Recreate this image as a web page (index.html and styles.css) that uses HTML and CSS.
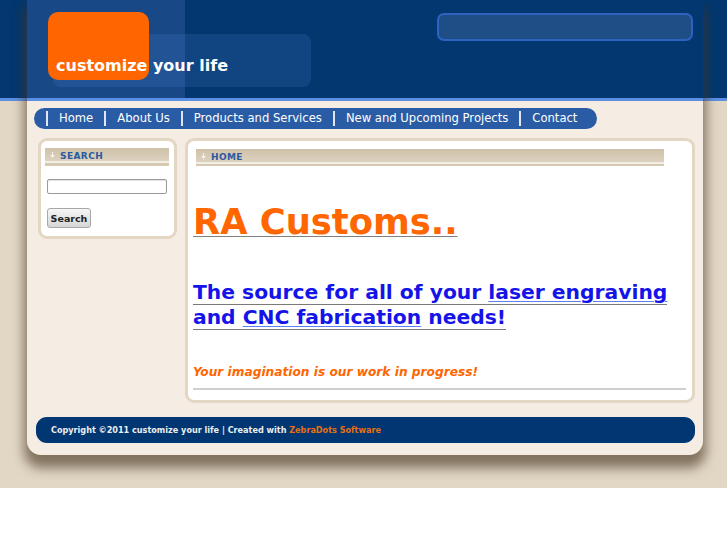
FILE: index.html
```html
<!DOCTYPE html>
<html lang="en">
<head>
    <meta charset="UTF-8">
    <title>customize your life</title>
    <link rel="stylesheet" href="styles.css">
</head>
<body>
    <div class="stage">
        <div class="page">
            <header class="masthead">
                <div class="brand">
                    <span class="brand-glass"></span>
                    <span class="brand-tab"></span>
                    <div class="brand-name">customize your life</div>
                </div>
                <div class="top-search"></div>
            </header>

            <nav class="menu">
                <ul>
                    <li><a href="#">Home</a></li>
                    <li><a href="#">About Us</a></li>
                    <li><a href="#">Products and Services</a></li>
                    <li><a href="#">New and Upcoming Projects</a></li>
                    <li><a href="#">Contact</a></li>
                </ul>
            </nav>

            <div class="columns">
                <aside class="sidebox">
                    <div class="boxbar">
                        <svg class="boxbar-arrow" width="5" height="6" viewBox="0 0 5 6"><path d="M2 0h1v3h2L2.5 6 0 3h2z" fill="#f7f2ea"/></svg>
                        <span>SEARCH</span>
                    </div>
                    <form class="search-form">
                        <input class="search-input" type="text">
                        <button class="search-button" type="button">Search</button>
                    </form>
                </aside>

                <main class="mainbox">
                    <div class="boxbar boxbar-main">
                        <svg class="boxbar-arrow" width="5" height="6" viewBox="0 0 5 6"><path d="M2 0h1v3h2L2.5 6 0 3h2z" fill="#f7f2ea"/></svg>
                        <span>HOME</span>
                    </div>
                    <h1 class="headline"><span>RA Customs..</span></h1>
                    <h2 class="tagline"><span class="tagline-line">The source for all of your <a href="#">laser engraving</a> and <a href="#">CNC fabrication</a> needs!</span></h2>
                    <p class="motto">Your imagination is our work in progress!</p>
                    <hr class="rule">
                </main>
            </div>

            <footer class="footer">
                Copyright &copy;2011 customize your life | Created with&nbsp;<a href="#">ZebraDots Software</a>
            </footer>
        </div>
    </div>
</body>
</html>
```

FILE: styles.css
```css
* {
    box-sizing: border-box;
}

html, body {
    margin: 0;
    padding: 0;
    background: #fff;
    font-family: "DejaVu Sans", Verdana, sans-serif;
}

.stage {
    height: 488px;
    overflow: hidden;
    background: linear-gradient(to bottom, #02376f 0, #02376f 98px, #5b8fe4 98px, #5b8fe4 101px, #e2d7c5 101px);
}

.page {
    width: 676px;
    height: 455px;
    margin-left: 27px;
    background: #f5ede3;
    border-radius: 0 0 14px 14px;
    box-shadow: 0 10px 12px 3px rgba(70, 52, 30, 0.62);
    display: flex;
    flex-direction: column;
}

/* header */

.masthead {
    height: 101px;
    display: flex;
    align-items: flex-start;
    background: #02376f;
    border-bottom: 3px solid #5b8fe4;
}

.brand {
    position: relative;
    width: 158px;
    height: 98px;
    background: #184886;
}

.brand-glass {
    position: absolute;
    left: 26px;
    top: 34px;
    width: 258px;
    height: 53px;
    border-radius: 8px;
    background: rgba(90, 140, 220, 0.17);
}

.brand-tab {
    position: absolute;
    left: 21px;
    top: 12px;
    width: 101px;
    height: 68px;
    border-radius: 10px;
    background: #ff6600;
}

.brand-name {
    position: relative;
    padding: 56px 0 0 29px;
    font-size: 16px;
    line-height: 20px;
    font-weight: bold;
    color: #fff;
    white-space: nowrap;
}

.top-search {
    width: 256px;
    height: 28px;
    margin: 13px 10px 0 auto;
    border: 2px solid #2c62c2;
    border-radius: 7px;
    background: #1f4e87;
}

/* menu */

.menu {
    width: 563px;
    height: 21px;
    margin: 7px 0 0 7px;
    background: #2a5ca6;
    border-radius: 11px;
}

.menu ul {
    list-style: none;
    margin: 0;
    padding: 0 0 0 12px;
    height: 21px;
    display: flex;
    align-items: center;
}

.menu li {
    height: 15px;
    line-height: 15px;
    padding: 0 11px 0 11px;
    border-left: 2px solid #dfe7f3;
    font-size: 11.6px;
}

.menu a {
    color: #fff;
    text-decoration: none;
}

/* columns */

.columns {
    display: flex;
    align-items: flex-start;
    gap: 8px;
    margin: 9px 0 0 11px;
}

.sidebox {
    width: 139px;
    padding: 7px 5px 8px 4px;
    border: 3px solid #e3d7c3;
    border-radius: 9px;
    background: #fff;
}

.mainbox {
    width: 510px;
    padding: 8px 6px 10px 5px;
    border: 3px solid #e3d7c3;
    border-radius: 9px;
    background: #fff;
}

.boxbar {
    height: 18px;
    padding: 1px 0 0 15px;
    position: relative;
    background: linear-gradient(to bottom, #cfc1a8 0, #ddd2c0 13px, #f3eee6 13px, #f3eee6 15px, #d6c9b2 15px, #d6c9b2 18px);
    font-size: 9px;
    line-height: 14px;
    font-weight: bold;
    letter-spacing: 0.4px;
    color: #2a5aa0;
}

.boxbar-main {
    width: 468px;
    height: 17px;
    margin-left: 3px;
}

.boxbar-arrow {
    position: absolute;
    left: 5px;
    top: 4px;
}

.search-form {
    padding-left: 2px;
}

.search-input {
    display: block;
    width: 120px;
    height: 15px;
    margin: 13px 0 0 0;
    padding: 0;
    border: 1px solid #9a9a9a;
    border-radius: 2px;
    box-shadow: inset 0 1px 1px rgba(0, 0, 0, 0.12);
    background: #fff;
}

.search-button {
    display: block;
    width: 44px;
    height: 20px;
    margin-top: 14px;
    padding: 0;
    border: 1px solid #a8a8a8;
    border-radius: 3px;
    background: linear-gradient(to bottom, #f6f6f6, #d6d6d6);
    font-family: "DejaVu Sans", sans-serif;
    font-size: 9.5px;
    font-weight: bold;
    color: #222;
}

/* content */

.headline {
    margin: 35px 0 0 0;
    font-size: 35.3px;
    line-height: 42px;
    color: #ff6600;
}

.headline span {
    text-decoration: underline;
    text-decoration-color: #808080;
    text-decoration-thickness: 1px;
    text-underline-offset: 2px;
}

.tagline {
    margin: 37px 0 0 0;
    font-size: 20.3px;
    line-height: 25px;
    color: #1414e8;
}

.tagline-line {
    border-bottom: 1px solid #7a7a7a;
}

.tagline a {
    color: #1414e8;
    text-decoration: underline;
    text-decoration-color: #5f7ff0;
    text-decoration-thickness: 1px;
    text-underline-offset: 2px;
}

.motto {
    margin: 35px 0 0 0;
    font-size: 12.2px;
    line-height: 15px;
    font-weight: bold;
    font-style: italic;
    color: #ff6600;
}

.rule {
    margin: 8px 0 0 0;
    height: 2px;
    border: 0;
    background: #cfcfcf;
}

/* footer */

.footer {
    width: 659px;
    height: 26px;
    margin: 14px 0 0 9px;
    padding-left: 15px;
    display: flex;
    align-items: center;
    background: #003672;
    border-radius: 11px;
    font-family: "DejaVu Sans Condensed", "DejaVu Sans", sans-serif;
    font-stretch: condensed;
    font-size: 9px;
    font-weight: bold;
    color: #eee;
    white-space: nowrap;
}

.footer a {
    color: #e8700f;
    text-decoration: none;
}
```
